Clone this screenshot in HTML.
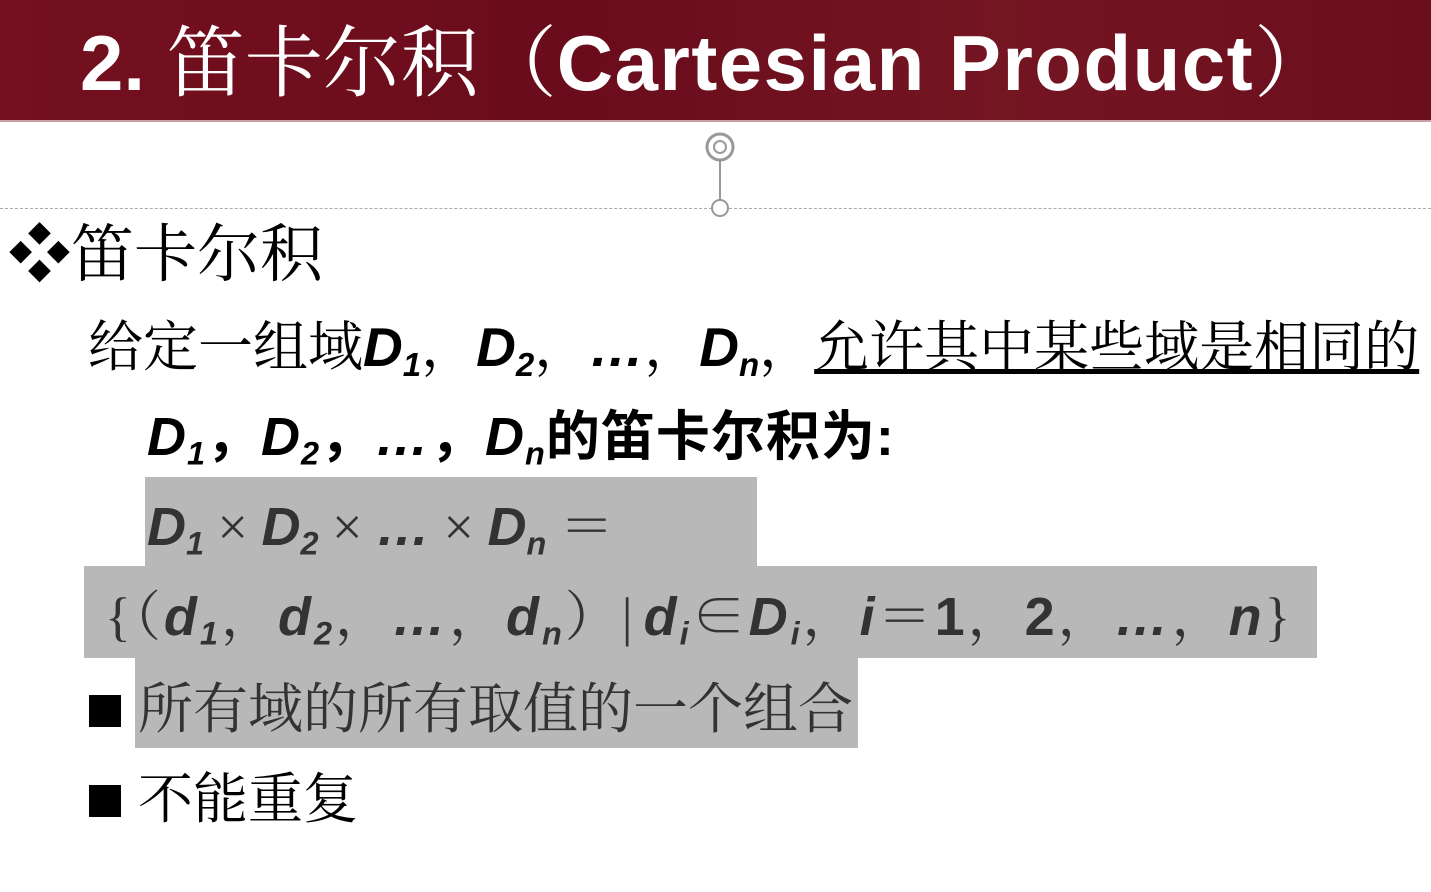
<!DOCTYPE html>
<html><head><meta charset="utf-8"><style>
body{margin:0;width:1431px;height:892px;overflow:hidden;background:#fff;position:relative;font-family:"Liberation Serif","Noto Serif CJK SC",serif;}
.hdr{position:absolute;left:0;top:0;width:1431px;height:120px;background:linear-gradient(90deg,#74101f,#6a0c1c 40%,#741522 70%,#6b0e1d);border-bottom:2px solid #c9a0a6}
.t{position:absolute;white-space:nowrap;line-height:1}
.m{font-family:"Liberation Sans",sans-serif;font-weight:bold;font-style:italic}
.s{font-family:"Liberation Sans","Noto Sans CJK SC",sans-serif}
sub{font-size:60%;vertical-align:-0.3em}
.hl{position:absolute;background:#b8b8b8}
.g{color:#333}
.c{margin-right:0}
</style></head><body>
<div class="hdr"></div>
<div class="t s" style="left:80px;top:18px;font-size:78px;color:#fff;font-weight:bold"><span>2.</span> <span style="font-family:'Noto Serif CJK SC',serif;font-weight:normal">笛卡尔积（</span><span style="letter-spacing:1.5px">Cartesian Product</span><span style="font-family:'Noto Serif CJK SC',serif;font-weight:normal">）</span></div>
<div style="position:absolute;left:0;top:208px;width:1431px;border-top:1px dashed #aaa"></div>
<svg style="position:absolute;left:698px;top:128px" width="50" height="95"><circle cx="22" cy="19" r="13" fill="none" stroke="#999" stroke-width="3"/><circle cx="22" cy="19" r="6" fill="none" stroke="#999" stroke-width="2"/><line x1="22" y1="32" x2="22" y2="73" stroke="#999" stroke-width="2"/><circle cx="22" cy="80" r="8" fill="#fff" stroke="#999" stroke-width="2"/></svg>
<div class="hl" style="left:145px;top:477px;width:612px;height:90px"></div>
<div class="hl" style="left:84px;top:566px;width:1233px;height:92px"></div>
<div class="hl" style="left:135px;top:658px;width:723px;height:90px"></div>
<div class="t" style="left:8px;top:224px;font-size:63px">❖笛卡尔积</div>
<div class="t" style="left:88px;top:320px;font-size:55px">给定一组域<span class="m">D<sub>1</sub></span>，<span class="m">D<sub>2</sub></span>，<span class="m">…</span>，<span class="m">D<sub>n</sub></span>，<span style="text-decoration:underline">允许其中某些域是相同的</span></div>
<div class="t s" style="left:147px;top:410px;font-size:54px;font-weight:bold;letter-spacing:1px"><span class="m">D<sub>1</sub></span>，<span class="m">D<sub>2</sub></span>，<span class="m">…</span>，<span class="m">D<sub>n</sub></span>的笛卡尔积为:</div>
<div class="t g" style="left:147px;top:500px;font-size:54px"><span class="m">D<sub>1</sub></span> × <span class="m">D<sub>2</sub></span> × <span class="m">…</span> × <span class="m">D<sub>n</sub></span> ＝</div>
<div class="t g" style="left:105px;top:590px;font-size:54px;letter-spacing:3px">{（<span class="m">d<sub>1</sub></span><span class="c">，</span><span class="m">d<sub>2</sub></span><span class="c">，</span><span class="m">…</span><span class="c">，</span><span class="m">d<sub>n</sub></span><span class="c">）</span>|<span class="m" style="margin-left:8px">d<sub>i</sub></span>∈<span class="m">D<sub>i</sub></span><span class="c">，</span><span class="m">i</span>＝<span class="s" style="font-weight:bold">1</span><span class="c">，</span><span class="s" style="font-weight:bold">2</span><span class="c">，</span><span class="m">…</span><span class="c">，</span><span class="m">n</span>}</div>
<div style="position:absolute;left:89px;top:695px;width:32px;height:32px;background:#000"></div>
<div class="t g" style="left:138px;top:682px;font-size:55px">所有域的所有取值的一个组合</div>
<div style="position:absolute;left:89px;top:785px;width:32px;height:32px;background:#000"></div>
<div class="t" style="left:138px;top:772px;font-size:55px">不能重复</div>
</body></html>
